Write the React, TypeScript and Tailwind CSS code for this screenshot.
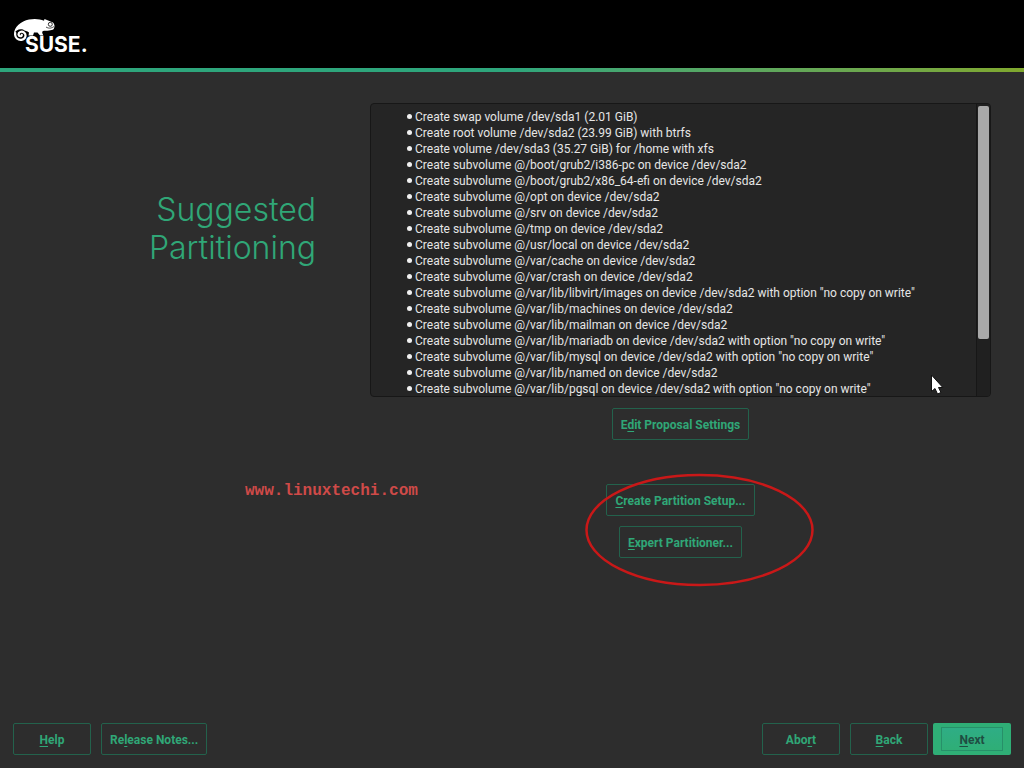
import * as React from 'react';

interface ActionButtonProps {
  label: string;
  hotkey: number;
  wide?: boolean;
}

const actions = [
  'Create swap volume /dev/sda1 (2.01 GiB)',
  'Create root volume /dev/sda2 (23.99 GiB) with btrfs',
  'Create volume /dev/sda3 (35.27 GiB) for /home with xfs',
  'Create subvolume @/boot/grub2/i386-pc on device /dev/sda2',
  'Create subvolume @/boot/grub2/x86_64-efi on device /dev/sda2',
  'Create subvolume @/opt on device /dev/sda2',
  'Create subvolume @/srv on device /dev/sda2',
  'Create subvolume @/tmp on device /dev/sda2',
  'Create subvolume @/usr/local on device /dev/sda2',
  'Create subvolume @/var/cache on device /dev/sda2',
  'Create subvolume @/var/crash on device /dev/sda2',
  'Create subvolume @/var/lib/libvirt/images on device /dev/sda2 with option "no copy on write"',
  'Create subvolume @/var/lib/machines on device /dev/sda2',
  'Create subvolume @/var/lib/mailman on device /dev/sda2',
  'Create subvolume @/var/lib/mariadb on device /dev/sda2 with option "no copy on write"',
  'Create subvolume @/var/lib/mysql on device /dev/sda2 with option "no copy on write"',
  'Create subvolume @/var/lib/named on device /dev/sda2',
  'Create subvolume @/var/lib/pgsql on device /dev/sda2 with option "no copy on write"',
];

/* Label with its keyboard shortcut letter underlined */
function HotkeyLabel({ label, hotkey }: { label: string; hotkey: number }) {
  return (
    <span>
      {label.slice(0, hotkey)}
      <span className="underline decoration-1 underline-offset-2 [text-decoration-skip-ink:none]">{label[hotkey]}</span>
      {label.slice(hotkey + 1)}
    </span>
  );
}

function ActionButton({ label, hotkey, wide }: ActionButtonProps) {
  return (
    <button
      type="button"
      className={`h-8 rounded-xs border border-[#23624c] pt-[2px] text-xs font-bold text-[#30a777] ${wide ? 'px-2' : 'w-[78px]'}`}
    >
      <HotkeyLabel label={label} hotkey={hotkey} />
    </button>
  );
}

function Logo() {
  return (
    <svg width="76" height="38" viewBox="0 0 76 38" role="img" aria-label="SUSE">
      <path
        fill="#fff"
        d="M0 16C0 9 7 3 15 1.5C21 0.3 26 1 30 2.8L30.5 1L39 4.5C40.5 6 41 8 40 10.5C39 12.6 35 12.6 30 12.8C27.5 13.2 28 15 29.5 17.5L26 17.5L23.5 14.5L20 14.5L19 17.5L14.5 17.5L15 14.5C13 13 11 13 9 11.5C5 10.5 1.5 12.5 0 16Z"
      />
      <path
        fill="none"
        stroke="#fff"
        strokeWidth="2.2"
        strokeLinecap="round"
        d="M1.2 15C0.4 20 4.5 22.3 7.5 21.8C11.5 21.2 12.6 17 10.3 14.8C7.8 12.6 4.2 14.2 4.6 16.8C5 18.8 8 18.6 7.8 16.9"
      />
      <circle cx="36.3" cy="6.3" r="2" fill="none" stroke="#000" strokeWidth="0.8" />
      <path fill="none" stroke="#000" strokeWidth="0.7" d="M32 9C35 11 38 10 40 8.5" />
      <text x="11" y="34" fill="#fff" fontFamily="Inter, sans-serif" fontWeight="700" fontSize="21">
        SUSE.
      </text>
    </svg>
  );
}

function Pointer() {
  return (
    <svg className="absolute right-[46px] bottom-0 h-[22px] w-[14px]" viewBox="0 0 14 22" aria-hidden="true">
      <path d="M1.5 1V17.5L5 14.5L7.5 20L11 18.5L8.5 13.5H12.8Z" fill="#fff" stroke="#111" strokeWidth="1" />
    </svg>
  );
}

export default function App() {
  return (
    <div className="flex min-h-screen flex-col bg-[#2d2d2d] font-[Roboto,sans-serif]">
      <header className="h-[68px] bg-black px-[14px] pt-[18px]">
        <Logo />
      </header>
      <div className="h-1 bg-linear-to-r from-[#2ea67c] from-50% to-[#80a82d]" />

      <main className="relative flex flex-1 pt-[31px] pr-[33px]">
        <h1 className="w-[370px] shrink-0 pt-[88px] pr-[54px] text-right font-[Inter,sans-serif] text-[32px] leading-[38px] font-light text-[#30a777]">
          Suggested
          <br />
          Partitioning
        </h1>

        <div className="flex min-w-0 flex-1 flex-col items-center">
          <section className="relative flex h-[294px] w-full overflow-hidden rounded-sm border border-[#171717] bg-[#252525]">
            <ul className="min-w-0 flex-1 pt-[5px] pl-9 text-xs leading-4 text-[#e6e6e6]">
              {actions.map((action) => (
                <li key={action} className="flex items-center gap-[3px] whitespace-nowrap">
                  <span className="mb-[2px] size-[5px] shrink-0 rounded-full bg-[#f0f0f0]" />
                  {action}
                </li>
              ))}
            </ul>
            <div className="w-[14px] border-l border-[#171717] bg-[#202020] px-px pt-[2px]">
              <div className="h-[233px] rounded-xs bg-[#a9a9a9]" />
            </div>
            <Pointer />
          </section>

          <div className="mt-[11px]">
            <ActionButton label="Edit Proposal Settings" hotkey={1} wide />
          </div>

          <div className="relative mt-11 flex flex-col items-center gap-[10px]">
            <ActionButton label="Create Partition Setup..." hotkey={0} wide />
            <ActionButton label="Expert Partitioner..." hotkey={0} wide />
            <svg
              className="pointer-events-none absolute -top-[11px] -left-[21px] h-[114px] w-[230px] max-w-none"
              viewBox="0 0 230 114"
              aria-hidden="true"
            >
              <ellipse cx="114.5" cy="57" rx="113" ry="55" fill="none" stroke="#c91818" strokeWidth="2.5" />
            </svg>
          </div>
        </div>

        <p className="absolute top-[409px] left-[245px] font-['Liberation_Mono',monospace] text-base font-bold leading-5 text-[#cf4a48]">
          www.linuxtechi.com
        </p>
      </main>

      <footer className="flex justify-between px-[13px] pb-[13px]">
        <div className="flex gap-[10px]">
          <ActionButton label="Help" hotkey={0} />
          <ActionButton label="Release Notes..." hotkey={2} wide />
        </div>
        <div className="flex">
          <div className="mr-[5px] flex gap-[10px]">
            <ActionButton label="Abort" hotkey={3} />
            <ActionButton label="Back" hotkey={0} />
          </div>
          <button
            type="button"
            className="h-8 w-[78px] rounded-xs bg-[#2fae76] px-2 py-1 text-xs font-bold text-[#1f4d42]"
          >
            <span className="flex h-full items-center justify-center border border-[#279069] bg-linear-to-b from-[#2fad85] to-[#2fae76] pt-[2px]">
              <HotkeyLabel label="Next" hotkey={0} />
            </span>
          </button>
        </div>
      </footer>
    </div>
  );
}
